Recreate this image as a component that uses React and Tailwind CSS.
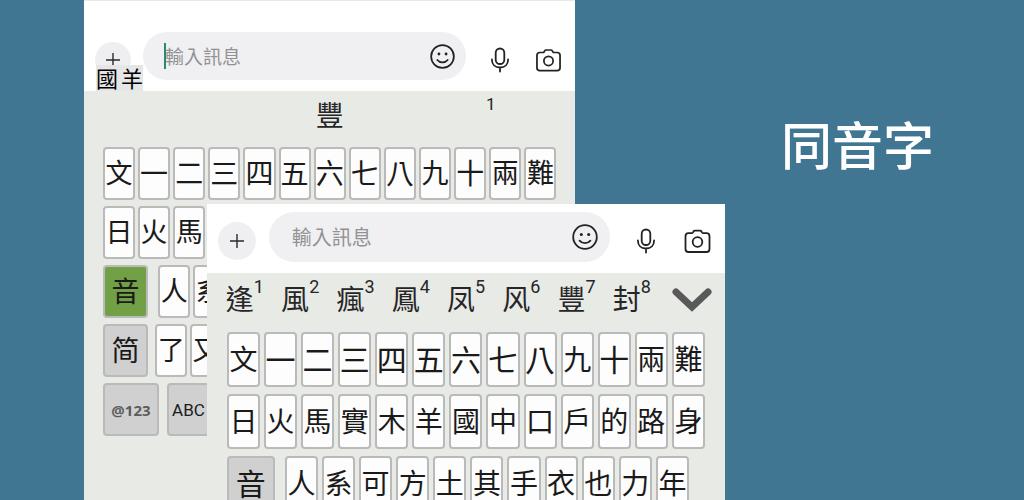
import clsx from 'clsx'

const numberKeys = ['文', '一', '二', '三', '四', '五', '六', '七', '八', '九', '十', '兩', '難']
const secondKeys = ['日', '火', '馬', '實', '木', '羊', '國', '中', '口', '戶', '的', '路', '身']
const thirdKeys = ['人', '系', '可', '方', '土', '其', '手', '衣', '也', '力', '年']
const candidates = ['逢', '風', '瘋', '鳳', '凤', '风', '豐', '封']

// these few are drawn a little larger than the other keys
const isLarge = (k) => '一二三四五六七八十'.includes(k)

function PlusIcon() {
  return (
    <svg viewBox="0 0 16 16" className="size-4" fill="none" stroke="#2b2b2d" strokeWidth="1.4">
      <path d="M8 1v14M1 8h14" />
    </svg>
  )
}

function SmileIcon({ className }) {
  return (
    <svg viewBox="0 0 26 26" className={className} fill="none" stroke="#222224" strokeWidth="1.8" strokeLinecap="round">
      <circle cx="13" cy="13" r="11.8" />
      <path d="M7.6 16.6c1.3 1.6 3.1 2.5 5.4 2.5s4.1-.9 5.4-2.5" />
      <circle cx="9.3" cy="10.4" r="1.5" fill="#222224" stroke="none" />
      <circle cx="16.7" cy="10.4" r="1.5" fill="#222224" stroke="none" />
    </svg>
  )
}

function MicIcon() {
  return (
    <svg viewBox="0 0 24 26" className="h-[26px] w-6" fill="none" stroke="#222224" strokeWidth="1.8" strokeLinecap="round">
      <rect x="7.7" y="1.5" width="8.6" height="15.5" rx="4.3" />
      <path d="M3.9 12.5c0 4.8 3.3 8 8.1 8s8.1-3.2 8.1-8M12 20.5v4" />
    </svg>
  )
}

function CameraIcon({ className }) {
  return (
    <svg viewBox="0 0 26 24" className={className} fill="none" stroke="#222224" strokeWidth="1.8" strokeLinejoin="round">
      <path d="M4 4.2h3.2c.6 0 1-.3 1.3-.8l.5-.9c.3-.6.8-.9 1.5-.9h5c.7 0 1.2.3 1.5.9l.5.9c.3.5.7.8 1.3.8H22c1.7 0 3 1.3 3 3V20c0 1.7-1.3 3-3 3H4c-1.7 0-3-1.3-3-3V7.2c0-1.7 1.3-3 3-3z" />
      <circle cx="13" cy="13" r="4.8" />
    </svg>
  )
}

function ChevronIcon() {
  return (
    <svg viewBox="0 0 40 24" className="h-6 w-10" fill="none" stroke="#595959" strokeWidth="7" strokeLinecap="round">
      <path d="M4 4l16 15L36 4" />
    </svg>
  )
}

function Key({ children, tone = 'bg-[#fdfdfd]', className }) {
  return (
    <button
      type="button"
      className={clsx('flex min-w-0 items-center justify-center overflow-hidden rounded-[4px] border-2 border-[#bababa] pt-[2px] leading-none whitespace-nowrap', tone, className)}
    >
      {children}
    </button>
  )
}

function BackPhone() {
  return (
    <section className="ml-[8.2%] flex w-[48%] shrink-0 flex-col border-t border-[#e8e8ea] bg-[#e8eae6]">
      <header className="relative flex items-center bg-white pt-[31px] pr-[14px] pb-[11px] pl-[11px]">
        <button type="button" aria-label="plus" className="mt-2 flex size-9 items-center justify-center rounded-full bg-[#efeff1]">
          <PlusIcon />
        </button>
        <div className="relative ml-3 flex h-12 flex-1 items-center rounded-[24px] bg-[#f0f0f2] pr-[11px] pl-[22px]">
          <span className="absolute left-[21px] h-[26px] w-[2px] bg-[#2c8a70]" />
          <input aria-label="輸入訊息" placeholder="輸入訊息" className="min-w-0 flex-1 bg-transparent pt-1 text-[19px] outline-none placeholder:text-[#929294]" />
          <button type="button" aria-label="smile"><SmileIcon className="size-[25px]" /></button>
        </div>
        <button type="button" aria-label="mic" className="mt-2 ml-[22px]"><MicIcon /></button>
        <button type="button" aria-label="camera" className="mt-2 ml-6"><CameraIcon className="h-6 w-[25px]" /></button>
        <div className="absolute bottom-0 left-3 flex h-[26px] items-center gap-[3px] bg-[#e6e6e6] pt-1 text-[22px] leading-none text-black">
          <span>國</span>
          <span>羊</span>
        </div>
      </header>

      <div className="relative flex h-14 shrink-0 justify-center text-[#262626]">
        <button type="button" className="pb-1 text-[28px] leading-[44px]">豐</button>
        <span className="absolute top-[3px] right-[80px] text-[17px] leading-5">1</span>
      </div>

      <div className="flex shrink-0 flex-col gap-[6px] px-[19px] text-[27px] text-[#1a1a1a]">
        <div className="grid h-[53px] grid-cols-13 gap-[3px]">
          {numberKeys.map((k) => <Key key={k} className={isLarge(k) && 'text-[28px]'}>{k}</Key>)}
        </div>
        <div className="grid h-[53px] grid-cols-13 gap-[3px]">
          {secondKeys.slice(0, 3).map((k) => <Key key={k}>{k}</Key>)}
        </div>
        <div className="flex h-[53px] gap-[3px]">
          <Key tone="bg-[#72a046]" className="mr-[7px] w-[10%] text-[28px]">音</Key>
          {thirdKeys.slice(0, 2).map((k) => <Key key={k} className="w-[7%]">{k}</Key>)}
        </div>
        <div className="flex h-[53px] gap-[3px]">
          <Key tone="bg-[#d0d0d0]" className="mr-1 w-[10%] text-[28px]">简</Key>
          <Key className="w-[7%]">了</Key>
          <Key className="w-[7%]">又</Key>
        </div>
        <div className="flex h-[53px] gap-2">
          <Key tone="bg-[#d0d0d0]" className="w-[56px] font-['Open_Sans',sans-serif] text-[15px] font-bold text-[#5c5c5c]">@123</Key>
          <Key tone="bg-[#d0d0d0]" className="w-[43px] text-[17px]">ABC</Key>
        </div>
      </div>
    </section>
  )
}

function FrontPhone() {
  return (
    <section className="absolute top-[204px] bottom-0 left-[20.2%] flex w-[50.6%] flex-col overflow-hidden bg-[#e8eae6]">
      <header className="flex shrink-0 items-center bg-white pt-2 pr-[14px] pb-[11px] pl-[11px]">
        <button type="button" aria-label="plus" className="mt-2 flex size-[38px] items-center justify-center rounded-full bg-[#efeff1]">
          <PlusIcon />
        </button>
        <div className="ml-[13px] flex h-[50px] flex-1 items-center rounded-[25px] bg-[#f0f0f2] pr-3 pl-[23px]">
          <input aria-label="輸入訊息" placeholder="輸入訊息" className="min-w-0 flex-1 bg-transparent pt-[2px] text-[20px] outline-none placeholder:text-[#929294]" />
          <button type="button" aria-label="smile"><SmileIcon className="size-[26px]" /></button>
        </div>
        <button type="button" aria-label="mic" className="mt-2 ml-6"><MicIcon /></button>
        <button type="button" aria-label="camera" className="mt-2 ml-[26px]"><CameraIcon className="h-6 w-[27px]" /></button>
      </header>

      <div className="flex h-[59px] shrink-0 items-start pr-[13px] pl-[19px] text-[#262626]">
        <div className="grid flex-1 grid-cols-8">
          {candidates.map((c, i) => (
            <button key={c} type="button" className="flex items-start">
              <span className="pt-[6px] text-[28px] leading-[44px]">{c}</span>
              <sup className="top-0 pt-1 text-[18px] leading-5">{i + 1}</sup>
            </button>
          ))}
        </div>
        <button type="button" aria-label="more" className="mt-[15px] ml-1"><ChevronIcon /></button>
      </div>

      <div className="flex shrink-0 flex-col gap-[7px] px-5 text-[28px] text-[#1a1a1a]">
        <div className="grid h-[55px] grid-cols-13 gap-1">
          {numberKeys.map((k) => <Key key={k} className={isLarge(k) && 'text-[30px]'}>{k}</Key>)}
        </div>
        <div className="grid h-[55px] grid-cols-13 gap-1">
          {secondKeys.map((k) => <Key key={k}>{k}</Key>)}
        </div>
        <div className="flex h-[55px] pr-4">
          <Key tone="bg-[#d0d0d0]" className="mr-[10px] w-12 shrink-0 text-[30px]">音</Key>
          <div className="grid flex-1 grid-cols-11 gap-1">
            {thirdKeys.map((k) => <Key key={k}>{k}</Key>)}
          </div>
        </div>
      </div>
    </section>
  )
}

export default function App() {
  return (
    <main lang="zh-Hant" className="relative flex h-screen overflow-hidden bg-[#417693] font-[Roboto,'Noto_Sans_CJK_TC',sans-serif]">
      <BackPhone />
      <FrontPhone />
      <h1 className="mt-[110px] mr-[8.8%] ml-auto text-[51px] leading-[75px] font-medium text-white">同音字</h1>
    </main>
  )
}
